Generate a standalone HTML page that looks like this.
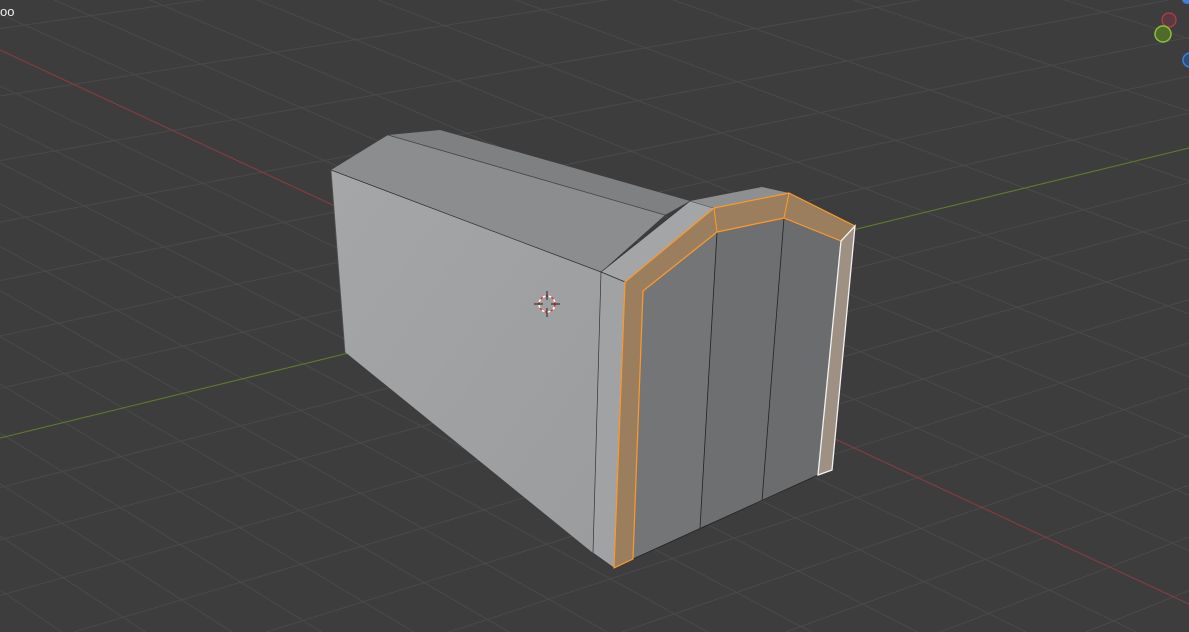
<!DOCTYPE html>
<html><head><meta charset="utf-8"><style>
html,body{margin:0;padding:0;background:#3d3d3d;overflow:hidden;width:1189px;height:632px}
svg{display:block}
.t{font-family:"Liberation Sans",sans-serif;font-size:13px;fill:#f0f0f0}
</style></head><body>
<svg id="s" width="1189" height="632" viewBox="0 0 1189 632" xmlns="http://www.w3.org/2000/svg">
<rect width="1189" height="632" fill="#3d3d3d"/>
<g id="grid" stroke="#4a4a4a" stroke-width="1"></g>
<line x1="0" y1="50" x2="1189" y2="604" stroke="#8a3b40" stroke-width="1"/>
<line x1="0" y1="438" x2="1189" y2="148" stroke="#5f7d2c" stroke-width="1"/>
<defs><linearGradient id="lf" x1="0" y1="0" x2="1" y2="1"><stop offset="0" stop-color="#a4a6a8"/><stop offset="1" stop-color="#9a9c9e"/></linearGradient></defs>
<polygon points="331,170 601,272 593,553 345,352" fill="url(#lf)"/>
<polygon points="331,170 388,135 665,215 601,272" fill="#8b8d8f"/>
<polygon points="388,135 440,130 690,201 665,215" fill="#7e8082"/>
<line x1="331" y1="170" x2="601" y2="272" stroke="#333" stroke-width="0.8"/>
<line x1="388" y1="135" x2="665" y2="215" stroke="#444" stroke-width="0.8"/>
<line x1="331" y1="170" x2="345" y2="352" stroke="#555" stroke-width="0.8"/>
<polygon points="601,272 690,201 714,208 625,282" fill="#a3a5a7" stroke="#333" stroke-width="0.7"/>
<polygon points="690,201 762,187 789,193 714,208" fill="#8d8f91"/>
<polygon points="601,272 625,282 614,568 593,553" fill="#a0a2a4" stroke="#333" stroke-width="0.7"/>
<polygon points="643,291 717,232 700,528 633,559" fill="#737577"/>
<polygon points="717,232 784,218 762,501 700,528" fill="#6d6f71"/>
<polygon points="784,218 841,241 818,475 762,501" fill="#6a6c6e"/>
<g stroke="#222" stroke-width="0.8"><line x1="717" y1="232" x2="700" y2="528"/><line x1="784" y1="218" x2="762" y2="501"/><line x1="633" y1="559" x2="818" y2="475"/></g>
<polygon points="625,282 714,208 789,193 855,226 841,241 784,218 717,232 643,291 633,559 614,568" fill="#9b7e5e" stroke="#ff9a2a" stroke-width="1.2" stroke-linejoin="round"/>
<g stroke="#ff9a2a" stroke-width="1"><line x1="714" y1="208" x2="717" y2="232"/><line x1="789" y1="193" x2="784" y2="218"/></g>
<polygon points="855,226 841,241 818,475 832,470" fill="#9e9184" stroke="#f2f2f2" stroke-width="1.3"/>
<g transform="translate(547,304)"><circle r="8" fill="none" stroke="#e33" stroke-width="1.5" stroke-dasharray="3 3"/><circle r="8" fill="none" stroke="#fff" stroke-width="1.5" stroke-dasharray="3 3" stroke-dashoffset="3"/><line x1="-13" y1="0" x2="-4" y2="0" stroke="#222"/><line x1="4" y1="0" x2="13" y2="0" stroke="#222"/><line x1="0" y1="-13" x2="0" y2="-4" stroke="#222"/><line x1="0" y1="4" x2="0" y2="13" stroke="#222"/></g>
<circle cx="1169" cy="20" r="7" fill="#5a3a3e" stroke="#b23b4a" stroke-width="1.3"/>
<circle cx="1163" cy="34" r="8" fill="#4f6a2a" stroke="#8bc13a" stroke-width="1.5"/>
<circle cx="1190" cy="60" r="7" fill="#2c4f7a" stroke="#3b7fd8" stroke-width="1.5"/>
<circle cx="1187" cy="-1" r="5" fill="#3b7fd8"/>
<text class="t" x="0" y="16">oo</text>
</svg>
<script>
var g=document.getElementById('grid'),ns='http://www.w3.org/2000/svg';
function L(x1,y1,x2,y2){var l=document.createElementNS(ns,'line');l.setAttribute('x1',x1);l.setAttribute('y1',y1);l.setAttribute('x2',x2);l.setAttribute('y2',y2);g.appendChild(l);}
var vr=[-2500,-1115];
for(var i=-30;i<40;i++){var off=i*52+i*Math.abs(i)*1.2;L(vr[0],vr[1],1189,604+off);}
var vg=[4000,-538];
for(var j=-30;j<40;j++){var off2=j*48+j*Math.abs(j)*1.5;L(vg[0],vg[1],0,438+off2);}
</script>
</body></html>
